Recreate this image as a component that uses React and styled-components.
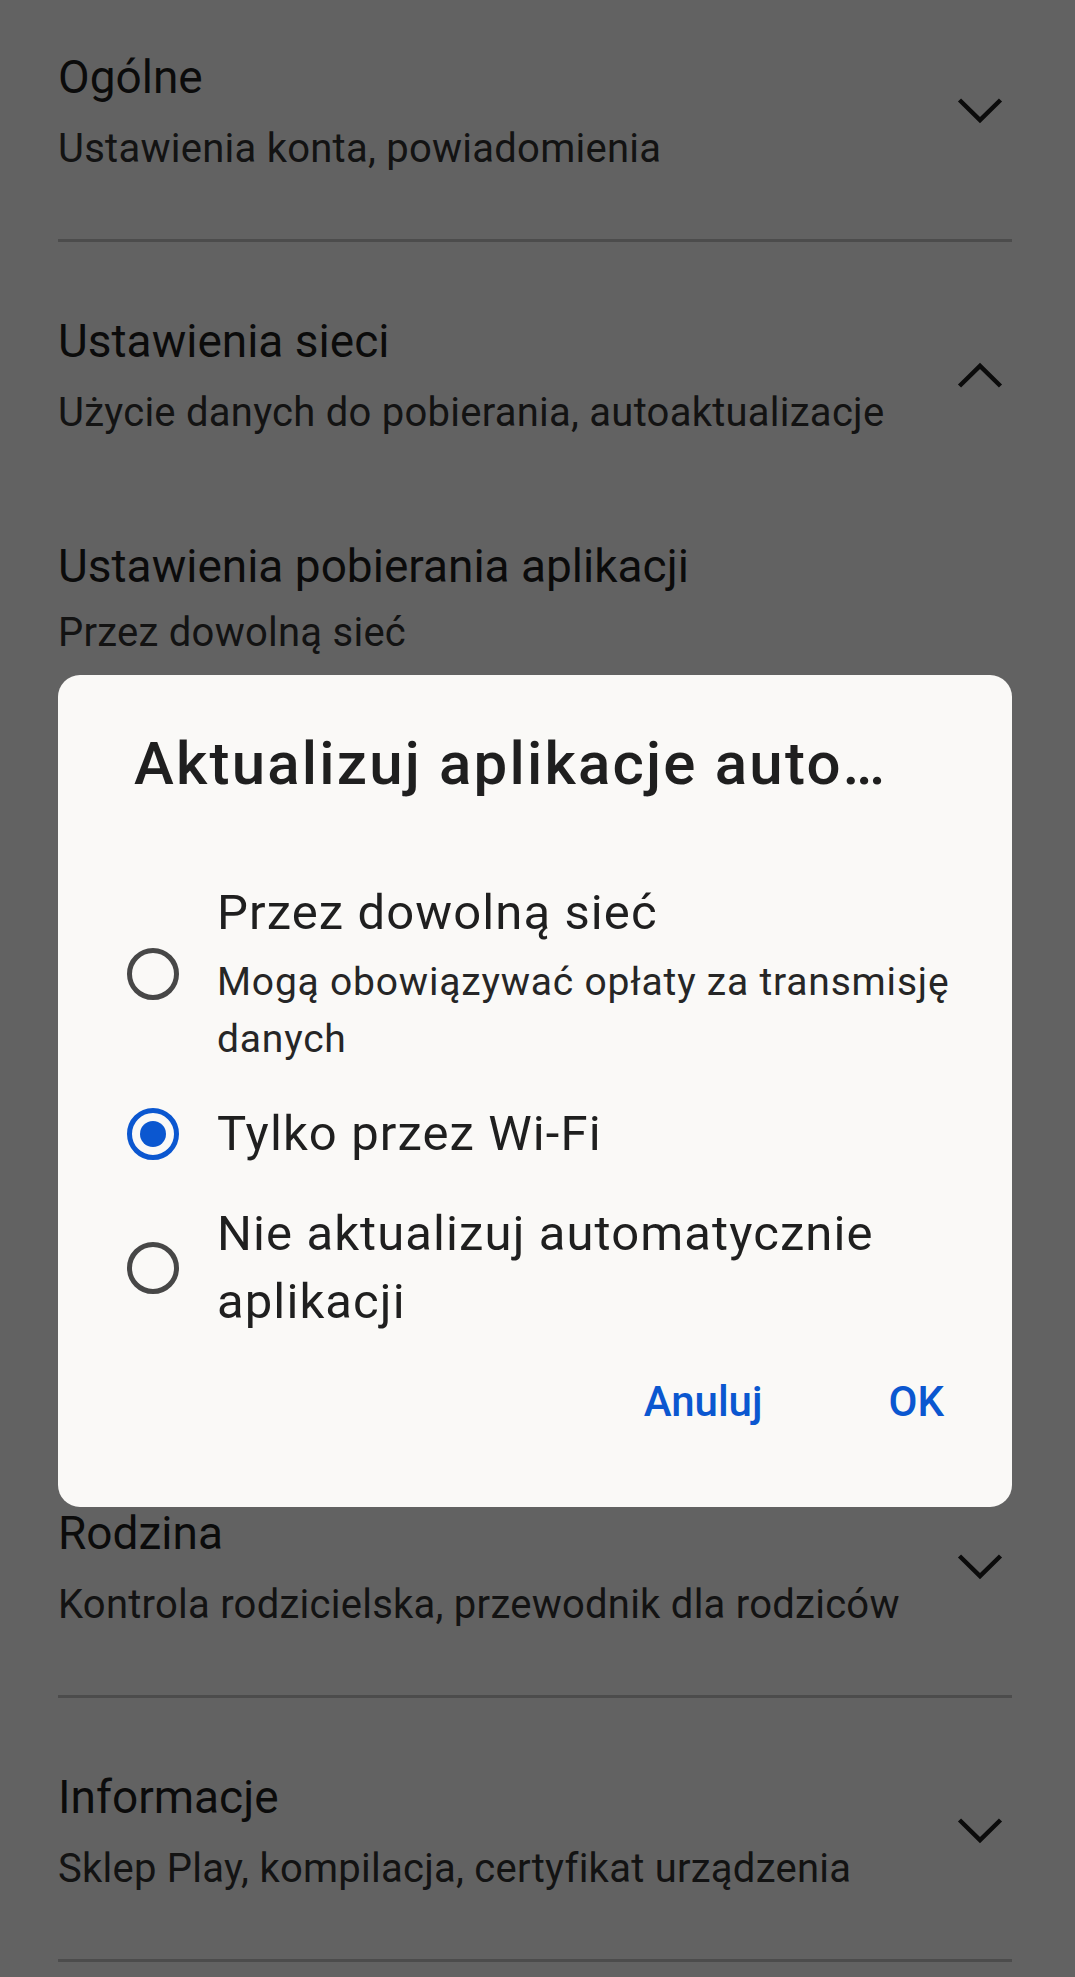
import React from 'react';
import styled, { createGlobalStyle } from 'styled-components';

const GlobalStyle = createGlobalStyle`
  html, body { margin: 0; padding: 0; background: #ffffff; }
  body { font-family: Roboto, "Noto Sans", "Liberation Sans", sans-serif; }
  * { box-sizing: border-box; }
`;

const Page = styled.div`
  position: relative;
  width: 1075px;
  height: 1977px;
  overflow: hidden;
  background: #ffffff;
`;

const List = styled.div`
  margin: -22px 63px 0 58px;
`;

const Section = styled.section`
  padding: 71px 0 ${p => (p.$expanded ? 59 : 64)}px;
  border-bottom: 3px solid #c7c7c7;
`;

const Header = styled.div`
  display: flex;
  align-items: center;
`;

const TextCol = styled.div`
  flex: 1;
  min-width: 0;
`;

const Title = styled.div`
  font-size: 46px;
  line-height: 56px;
  color: #1f1f1f;
  white-space: nowrap;
`;

const Subtitle = styled.div`
  margin-top: ${p => (p.$tight ? 13 : 18)}px;
  font-size: 40px;
  line-height: 52px;
  letter-spacing: 0.25px;
  color: #333333;
  white-space: nowrap;
`;

const ChevronSvg = styled.svg`
  flex: none;
  width: 48px;
  height: 48px;
  margin-right: 8px;
`;

const SubList = styled.div`
  padding-top: 49px;
`;

const SubItem = styled.div`
  padding: 50px 0;
`;

const Scrim = styled.div`
  position: absolute;
  inset: 0;
  background: rgba(0, 0, 0, 0.615);
  padding: 675px 63px 0 58px;
`;

const Dialog = styled.div`
  background: #faf9f7;
  border-radius: 22px;
  padding: 51px 36px 55px 69px;
`;

const DialogTitle = styled.h2`
  margin: 0 0 0 7px;
  font-size: 60px;
  line-height: 76px;
  font-weight: 500;
  letter-spacing: 2.2px;
  color: #1f1f1f;
  white-space: nowrap;
`;

const Options = styled.div`
  margin-top: 61px;
  display: flex;
  flex-direction: column;
`;

const OptionRow = styled.label`
  display: flex;
  align-items: center;
  gap: 38px;
  padding: 16px 0;
`;

const Radio = styled.span`
  flex: none;
  width: 52px;
  height: 52px;
  border-radius: 50%;
  border: 5px solid ${p => (p.$checked ? '#0b57d0' : '#474747')};
  display: grid;
  place-items: center;
`;

const RadioDot = styled.span`
  width: 26px;
  height: 26px;
  border-radius: 50%;
  background: #0b57d0;
`;

const OptionText = styled.div`
  flex: 1;
  min-width: 0;
`;

const OptionTitle = styled.div`
  font-size: 49px;
  line-height: 68px;
  letter-spacing: 1.1px;
  color: #1f1f1f;
`;

const OptionSub = styled.div`
  margin-top: 7px;
  font-size: 39px;
  line-height: 57px;
  letter-spacing: 0.8px;
  color: #262626;
`;

const Actions = styled.div`
  display: flex;
  justify-content: flex-end;
  gap: 62px;
`;

const TextButton = styled.button`
  height: 100px;
  line-height: 100px;
  padding: 0 32px;
  border: none;
  background: none;
  font-family: inherit;
  font-size: 42px;
  font-weight: 500;
  color: #0b57d0;
`;

function Chevron({ up }) {
  return (
    <ChevronSvg viewBox="0 0 48 48" aria-hidden="true">
      <polyline
        points={up ? '3.5,34 24,14 44.5,34' : '3.5,12 24,32 44.5,12'}
        fill="none"
        stroke="#1f1f1f"
        strokeWidth="4.5"
        strokeLinejoin="miter"
      />
    </ChevronSvg>
  );
}

function CollapsedSection({ title, subtitle }) {
  return (
    <Section>
      <Header>
        <TextCol>
          <Title>{title}</Title>
          <Subtitle>{subtitle}</Subtitle>
        </TextCol>
        <Chevron />
      </Header>
    </Section>
  );
}

const subItems = [
  ['Ustawienia pobierania aplikacji', 'Przez dowolną sieć'],
  ['Aktualizuj aplikacje automatycznie', 'Tylko przez Wi-Fi'],
  ['Autoodtwarzanie filmów', 'Tylko przez Wi-Fi'],
  ['Automatyczne aktualizacje', 'Włączone'],
];

const options = [
  { title: 'Przez dowolną sieć', sub: 'Mogą obowiązywać opłaty za transmisję danych' },
  { title: 'Tylko przez Wi-Fi', checked: true },
  { title: 'Nie aktualizuj automatycznie aplikacji' },
];

export default function App() {
  return (
    <Page>
      <GlobalStyle />
      <List>
        <CollapsedSection title="Ogólne" subtitle="Ustawienia konta, powiadomienia" />
        <Section $expanded>
          <Header>
            <TextCol>
              <Title>Ustawienia sieci</Title>
              <Subtitle>Użycie danych do pobierania, autoaktualizacje</Subtitle>
            </TextCol>
            <Chevron up />
          </Header>
          <SubList>
            {subItems.map(([t, s]) => (
              <SubItem key={t}>
                <Title>{t}</Title>
                <Subtitle $tight>{s}</Subtitle>
              </SubItem>
            ))}
          </SubList>
        </Section>
        <CollapsedSection title="Rodzina" subtitle="Kontrola rodzicielska, przewodnik dla rodziców" />
        <CollapsedSection title="Informacje" subtitle="Sklep Play, kompilacja, certyfikat urządzenia" />
      </List>
      <Scrim>
        <Dialog role="dialog">
          <DialogTitle>Aktualizuj aplikacje auto…</DialogTitle>
          <Options>
            {options.map(o => (
              <OptionRow key={o.title}>
                <Radio $checked={o.checked}>{o.checked && <RadioDot />}</Radio>
                <OptionText>
                  <OptionTitle>{o.title}</OptionTitle>
                  {o.sub && <OptionSub>{o.sub}</OptionSub>}
                </OptionText>
              </OptionRow>
            ))}
          </Options>
          <Actions>
            <TextButton>Anuluj</TextButton>
            <TextButton>OK</TextButton>
          </Actions>
        </Dialog>
      </Scrim>
    </Page>
  );
}
